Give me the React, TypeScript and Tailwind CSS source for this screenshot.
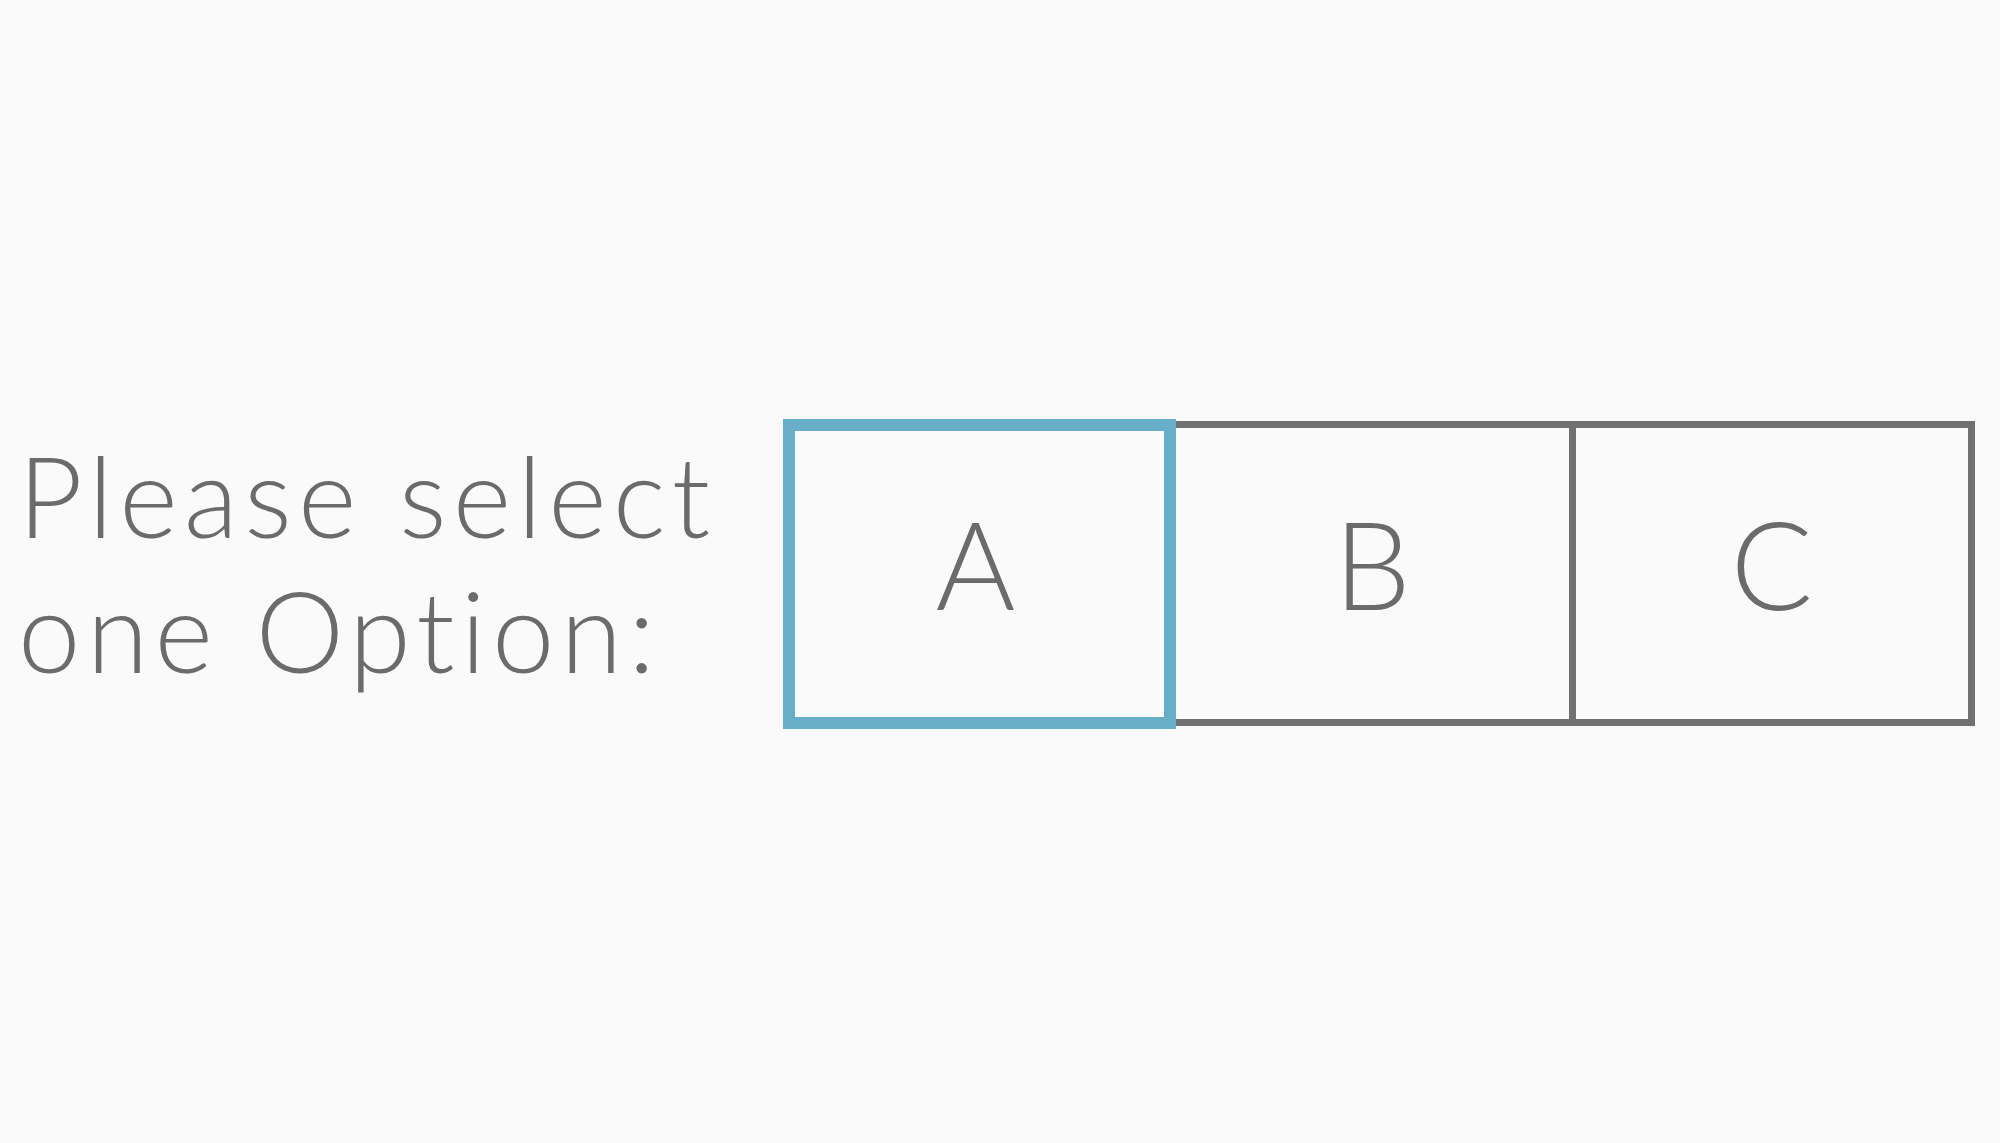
export default function App() {
  const options = ["A", "B", "C"];
  const selected = "A";

  return (
    <div
      className="min-h-screen w-full bg-[#fafafa] text-[#6b6b6b] flex items-center pl-[18px] pr-[25px] [font-variant-ligatures:none]"
      style={{ fontFamily: "Lato, 'Open Sans', sans-serif" }}
    >
      {/* Prompt */}
      <div className="w-[765px] shrink-0 mb-[20px] text-[112px] leading-[135px] font-light tracking-[0.055em]">
        Please select
        <br />
        one Option:
      </div>

      {/* Options */}
      <div className="flex flex-1 items-center mt-[4px]">
        {options.map((opt) =>
          opt === selected ? (
            <button
              key={opt}
              className="w-[393px] h-[310px] shrink-0 border-[12px] border-[#67afc9] flex items-center justify-center pb-[20px] pr-[8px] text-[122px] font-light"
            >
              {opt}
            </button>
          ) : (
            <button
              key={opt}
              className="flex-1 h-[305px] border-y-[7px] border-r-[7px] border-[#717171] flex items-center justify-center pb-[20px] text-[122px] font-light"
            >
              {opt}
            </button>
          )
        )}
      </div>
    </div>
  );
}
